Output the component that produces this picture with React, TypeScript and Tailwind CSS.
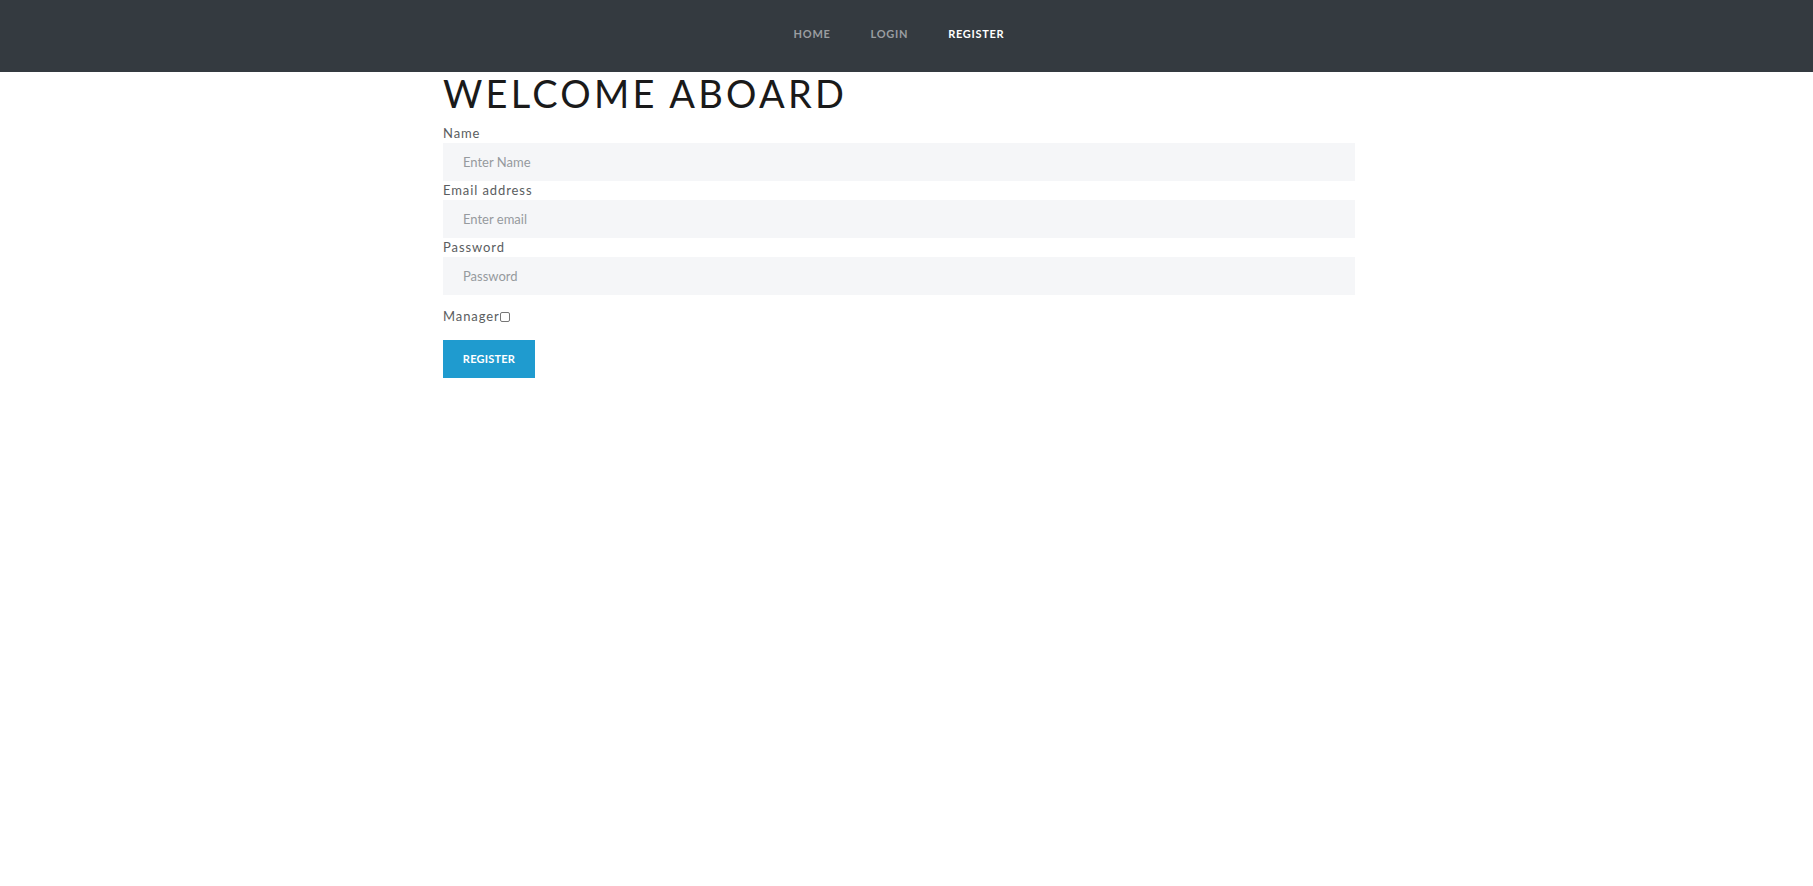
import React from "react";

const Navbar = () => {
  return (
    <nav className="h-[72px] w-full bg-[#343a40]">
      <div className="flex h-full w-[1798px] items-center justify-center gap-[40px] pb-[4px]">
        <a href="#" className="text-[11px] font-bold uppercase tracking-[0.065em] text-[#9a9da0]">
          Home
        </a>
        <a href="#" className="text-[11px] font-bold uppercase tracking-[0.065em] text-[#9a9da0]">
          Login
        </a>
        <a href="#" className="text-[11px] font-bold uppercase tracking-[0.065em] text-white">
          Register
        </a>
      </div>
    </nav>
  );
};

const Field = ({ label, placeholder, type }: { label: string; placeholder: string; type: string }) => {
  return (
    <div>
      <label className="block h-[19px] text-[13px] leading-[19px] tracking-[0.07em] text-[#5a5d60]">{label}</label>
      <input
        type={type}
        placeholder={placeholder}
        className="block h-[38px] w-full bg-[#f5f6f8] px-[20px] text-[13px] text-[#55595c] outline-none placeholder:text-[#969a9e]"
      />
    </div>
  );
};

export default function App() {
  return (
    <div className="min-h-screen bg-white font-['Lato','Liberation_Sans',sans-serif]">
      <Navbar />
      <div className="ml-[443px] w-[912px]">
        <h1 className="h-[52px] text-[38px] leading-[42px] tracking-[0.085em] text-[#1a1a1a]">WELCOME ABOARD</h1>
        <form>
          <Field label="Name" placeholder="Enter Name" type="text" />
          <Field label="Email address" placeholder="Enter email" type="email" />
          <Field label="Password" placeholder="Password" type="password" />
          <div className="mt-[12px] flex items-center text-[13px] leading-[19px] tracking-[0.07em] text-[#5a5d60]">
            Manager
            <span className="inline-block h-[10px] w-[10px] rounded-[2px] border border-[#767676] bg-white" />
          </div>
          <button
            type="button"
            className="mt-[14px] h-[38px] w-[92px] bg-[#1f9bcf] text-[11px] font-bold uppercase tracking-[0.02em] text-white"
          >
            Register
          </button>
        </form>
      </div>
    </div>
  );
}
